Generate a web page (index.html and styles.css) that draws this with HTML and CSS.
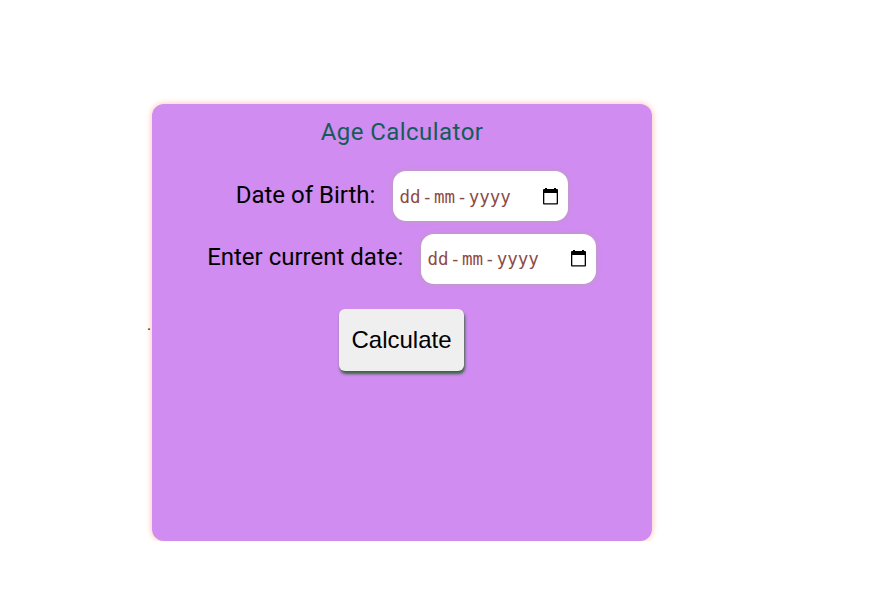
FILE: index.html
```html
<!DOCTYPE html>
<html lang="en">
<head>
<meta charset="utf-8">
<title>Age Calculator</title>
<link rel="stylesheet" href="styles.css">
</head>
<body>
<main class="page">
  <span class="dot">.</span>
  <section class="card">
    <h1 class="title">Age Calculator</h1>
    <div class="row">
      <span class="label">Date of Birth:</span>
      <div class="date">
        <span class="value"><span>dd</span><span class="dash">-</span><span>mm</span><span class="dash">-</span><span>yyyy</span></span>
        <svg class="icon" viewBox="0 0 15 17"><path fill="#000" fill-rule="evenodd" d="M2 0h2v1h7V0h2v1h1a1 1 0 0 1 1 1V15.500a1 1 0 0 1-1 1H1a1 1 0 0 1-1-1V2a1 1 0 0 1 1-1h1zM1.300 5v10.200h12.400V5z"/></svg>
      </div>
    </div>
    <div class="row current">
      <span class="label">Enter current date:</span>
      <div class="date">
        <span class="value"><span>dd</span><span class="dash">-</span><span>mm</span><span class="dash">-</span><span>yyyy</span></span>
        <svg class="icon" viewBox="0 0 15 17"><path fill="#000" fill-rule="evenodd" d="M2 0h2v1h7V0h2v1h1a1 1 0 0 1 1 1V15.500a1 1 0 0 1-1 1H1a1 1 0 0 1-1-1V2a1 1 0 0 1 1-1h1zM1.300 5v10.200h12.400V5z"/></svg>
      </div>
    </div>
    <button class="calculate" type="button">Calculate</button>
  </section>
</main>
</body>
</html>
```
FILE: styles.css
```css
* {
  box-sizing: border-box;
}

body {
  margin: 0;
  background: #fff;
  color: #000;
  font-family: Roboto, sans-serif;
}

.page {
  display: flex;
  padding: 104px 0 0 147px;
}

.dot {
  width: 5px;
  margin-top: 211px;
  font-size: 16px;
  line-height: 20px;
}

.card {
  display: flex;
  flex-direction: column;
  align-items: center;
  width: 500px;
  height: 437px;
  padding-top: 12px;
  border-radius: 12px;
  background: #d08cf0;
  box-shadow: 0 0 6px #ffb9aa;
}

.title {
  margin: 0 0 23px;
  color: #155c58;
  font-size: 24px;
  font-weight: 400;
  line-height: 32px;
  letter-spacing: 0.45px;
}

.row {
  display: flex;
  gap: 17.600px;
  height: 50px;
  margin-bottom: 13px;
}

.label {
  font-size: 24px;
  line-height: 48px;
  white-space: nowrap;
}

.date {
  display: flex;
  justify-content: space-between;
  width: 175.400px;
  height: 50px;
  padding: 0 10px 0 6.500px;
  border-radius: 13px;
  background: #fff;
  box-shadow: 0 0 4px #b5a3ad;
}

.value {
  display: flex;
  color: #8c4a45;
  font-family: "DejaVu Sans Mono", monospace;
  font-size: 17.500px;
  line-height: 52px;
}

.dash {
  padding: 0 1.500px;
}

.icon {
  width: 15px;
  height: 17px;
  margin-top: 17px;
}

.current {
  margin-right: 0.600px;
}

.current .label {
  line-height: 46px;
}

.current .value {
  line-height: 50px;
}

.current .icon {
  margin-top: 16px;
}

.calculate {
  width: 125px;
  height: 62px;
  margin: 12px 1px 0 0;
  padding: 0;
  border: 0;
  border-radius: 6px;
  background: #efefef;
  box-shadow: 1px 3px 3px #38643f;
  color: #000;
  font: 24px "Liberation Sans", sans-serif;
}
```
